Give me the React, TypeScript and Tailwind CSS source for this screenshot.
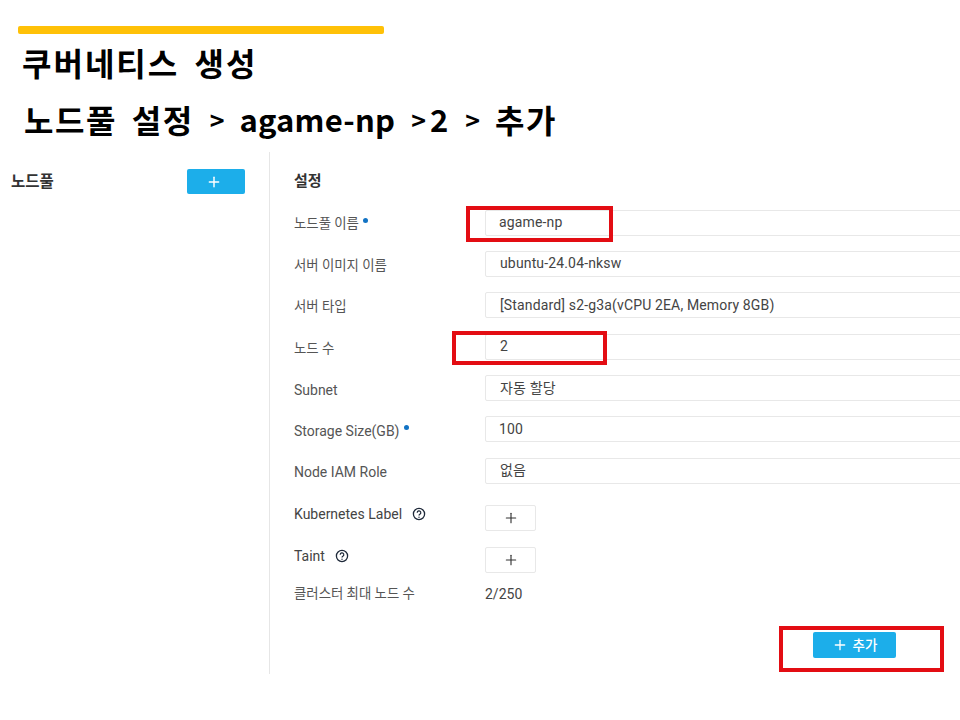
import { Plus } from 'lucide-react';

const cjk = "font-['Roboto','Noto_Sans_CJK_KR',sans-serif]";

function Help() {
  return (
    <svg width="14" height="14" viewBox="0 0 14 14" fill="none" className="text-gray-800">
      <circle cx="7" cy="7" r="5.6" stroke="currentColor" strokeWidth="1.3" />
      <path d="M5.2 5.7a1.8 1.8 0 1 1 2.7 1.5c-.6.4-.9.7-.9 1.3" stroke="currentColor" strokeWidth="1.2" fill="none" />
      <circle cx="7" cy="10.2" r=".7" fill="currentColor" />
    </svg>
  );
}

function Dot() {
  return <span className="ml-[4px] mb-[7px] inline-block h-[5px] w-[5px] rounded-full bg-[#1273c4]" />;
}

function Row({ label, value, dot, latin, pad = 'pl-[14px]', mt = 'mt-[15.4px]', hl }: { label: string; value: string; dot?: boolean; latin?: boolean; pad?: string; mt?: string; hl?: string }) {
  return (
    <div className={`relative flex items-center ${mt}`}>
      <div className={`flex w-[191px] shrink-0 items-center pt-[4px] text-[#555] ${latin ? 'text-[14px]' : 'text-[13.4px]'}`}>
        {label}
        {dot && <Dot />}
      </div>
      <div className={`flex h-[26px] w-[500px] shrink-0 items-center rounded-[2px] border border-[#e8e8e8] bg-white text-[14px] tracking-[0.15px] text-[#444] ${pad}`}>
        {value}
      </div>
      {hl && <div className={`absolute border-[4px] border-[#e30d13] ${hl}`} />}
    </div>
  );
}

function AddRow({ label, mt }: { label: string; mt: string }) {
  return (
    <div className={`flex items-center ${mt}`}>
      <div className="flex w-[191px] shrink-0 items-center gap-[10px] pb-[8px] text-[14px] text-[#444]">
        {label}
        <Help />
      </div>
      <div className="flex h-[26px] w-[51px] items-center justify-center rounded-[2px] border border-[#e8e8e8] bg-white text-[#333]">
        <Plus size={16} strokeWidth={1.7} />
      </div>
    </div>
  );
}

function Ko({ children }: { children: string }) {
  return <span className="text-[32px] tracking-[1.5px]">{children}</span>;
}

function Gt({ ml }: { ml: string }) {
  return <span className={`text-[25px] ${ml}`}>{'>'}</span>;
}

export default function App() {
  return (
    <div className={`relative h-[720px] w-[960px] overflow-hidden bg-white ${cjk}`}>
      <div className="px-[18px] pt-[26px]">
        <div className="h-[8px] w-[366px] rounded-[2px] bg-[#ffc107]" />
        <h1 className="ml-[4px] mt-[6px] h-[44px] text-[32px] font-bold leading-[44px] tracking-[2px] [word-spacing:6px] text-black font-['Noto_Sans_CJK_KR',sans-serif]">
          쿠버네티스 생성
        </h1>
        <h2 className="ml-[6px] mt-[13px] flex h-[44px] items-center text-[31px] font-bold leading-[44px] text-black whitespace-pre font-['Noto_Sans_CJK_KR',sans-serif]">
          <Ko>노드풀</Ko>
          <span className="ml-[15px]"><Ko>설정</Ko></span>
          <Gt ml="ml-[16px]" />
          <span className="ml-[15px] tracking-[0.2px]">agame-np</span>
          <Gt ml="ml-[16px]" />
          <span className="ml-[4px]">2</span>
          <Gt ml="ml-[17px]" />
          <span className="ml-[15px]"><Ko>추가</Ko></span>
        </h2>
      </div>

      <div className="mt-[11px] flex h-[522px]">
        <div className="flex h-full w-[270px] shrink-0 items-start justify-between border-r border-[#e6e6e6] pl-[11px] pr-[24px] pt-[17px]">
          <span className="pt-[1px] text-[15.5px] font-bold leading-[24px] text-[#333]">노드풀</span>
          <div className="flex h-[25px] w-[58px] items-center justify-center rounded-[2px] bg-[#1caeea] pr-[5px] text-white">
            <Plus size={16} strokeWidth={2.2} />
          </div>
        </div>

        <div className="min-w-0 flex-1 pl-[24px] pt-[20px]">
          <div className="text-[15px] font-bold leading-[18px] text-[#333]">설정</div>
          <Row label="노드풀 이름" value="agame-np" dot mt="mt-[19.5px]" pad="pl-[13px]" hl="left-[172px] top-[-4px] h-[36px] w-[147px]" />
          <Row label="서버 이미지 이름" value="ubuntu-24.04-nksw" />
          <Row label="서버 타입" value="[Standard] s2-g3a(vCPU 2EA, Memory 8GB)" />
          <Row label="노드 수" value="2" hl="left-[158px] top-[-3px] h-[34px] w-[155px]" />
          <Row label="Subnet" value="자동 할당" latin />
          <Row label="Storage Size(GB)" value="100" dot latin pad="pl-[13px]" />
          <Row label="Node IAM Role" value="없음" latin />
          <AddRow label="Kubernetes Label" mt="mt-[20.1px]" />
          <AddRow label="Taint" mt="mt-[13px]" />
          <div className="mt-[9px] flex items-center text-[14px] text-[#444]">
            <span className="w-[191px] shrink-0 text-[13.4px] text-[#555]">클러스터 최대 노드 수</span>
            <span>2/250</span>
          </div>
          <div className="relative mt-[27px] ml-[519px] flex h-[26px] w-[83px] items-center justify-center gap-[5px] rounded-[2px] bg-[#1caeea] text-[13.5px] font-medium text-white">
            <Plus size={16} strokeWidth={2} />
            추가
            <div className="absolute left-[-34px] top-[-6px] h-[46px] w-[165px] border-[4px] border-[#e30d13]" />
          </div>
        </div>
      </div>
    </div>
  );
}
